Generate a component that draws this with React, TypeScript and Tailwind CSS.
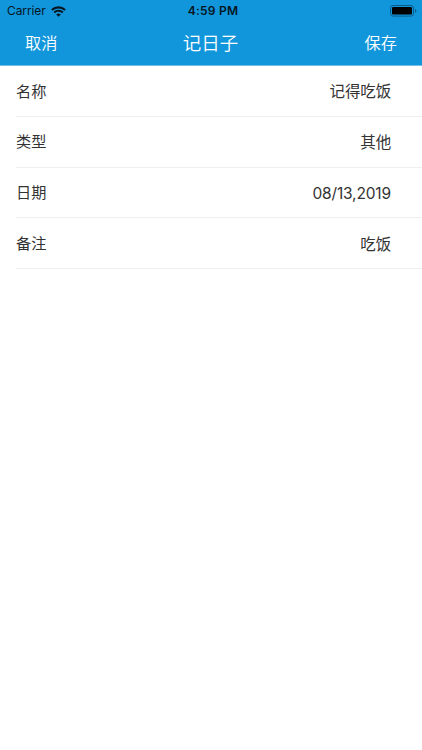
type Field = {
  label: string;
  value: string;
};

const FIELDS: Field[] = [
  { label: '名称', value: '记得吃饭' },
  { label: '类型', value: '其他' },
  { label: '日期', value: '08/13,2019' },
  { label: '备注', value: '吃饭' },
];

const WifiIcon = () => (
  <svg className="w-[15px] h-[11px]" viewBox="0 0 15 11" fill="none" stroke="#06151f">
    <path d="M0.9 4a9.4 9.4 0 0 1 13.2 0" strokeWidth="2.2" />
    <path d="M3.2 6.5a6.1 6.1 0 0 1 8.6 0" strokeWidth="2" />
    <path d="M7.5 10.8L5.2 8.5a3.3 3.3 0 0 1 4.6 0z" fill="#06151f" stroke="none" />
  </svg>
);

const BatteryIcon = () => (
  <svg className="w-[27px] h-[12px]" viewBox="0 0 27 12">
    <rect x="0.5" y="0.5" width="23" height="10.6" rx="2.6" fill="none" stroke="#0b5b88" />
    <rect x="2" y="2" width="20" height="7.6" rx="1.3" fill="#000" />
    <path d="M25 4v3.8a2 2 0 0 0 0-3.8z" fill="#0b5b88" />
  </svg>
);

const StatusBar = () => (
  <div className="grid grid-cols-3 items-center h-[22px] pl-[7px] pr-[5px] text-[#06151f]">
    <div className="flex items-center gap-[5px]">
      <span className="text-[12px] leading-[22px] tracking-[-0.1px]">Carrier</span>
      <WifiIcon />
    </div>
    <span className="pl-[2px] text-center text-[12px] leading-[22px] font-semibold tracking-[0.25px]">
      4:59 PM
    </span>
    <div className="flex justify-end">
      <BatteryIcon />
    </div>
  </div>
);

const NavBar = () => (
  <div className="flex items-center justify-between h-[43px] px-[25px] text-white font-[350]">
    <button className="text-[16.2px]">取消</button>
    <h1 className="pr-px text-[18.5px]">记日子</h1>
    <button className="text-[16.2px]">保存</button>
  </div>
);

const FieldRow = ({ label, value }: Field) => (
  <li className="flex items-center justify-between h-[50.8px] ml-4 pt-[2px] pr-[31px] border-b border-[#efefef] text-[15.2px] text-[#333]">
    <span>{label}</span>
    <span className="text-[15.5px] tracking-[-0.15px]">{value}</span>
  </li>
);

const App = () => {
  return (
    <main className="min-h-screen bg-white font-[Inter,'Noto_Sans_CJK_SC',sans-serif]">
      <header className="h-[66px] bg-[#1296db] border-b border-[#6fbfe9]">
        <StatusBar />
        <NavBar />
      </header>
      <ul>
        {FIELDS.map((field) => (
          <FieldRow key={field.label} {...field} />
        ))}
      </ul>
    </main>
  );
};

export default App;
